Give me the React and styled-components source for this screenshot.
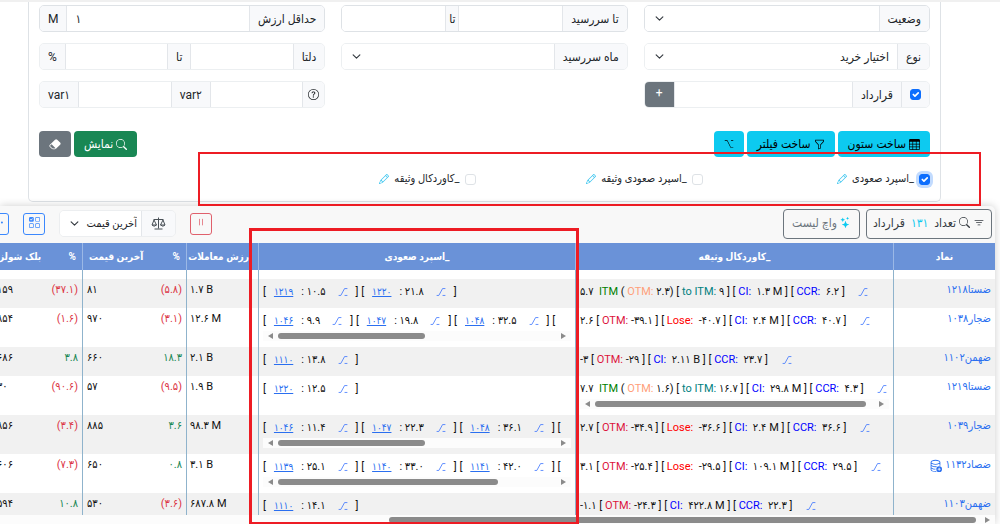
import React from "react";
import styled, { createGlobalStyle, css } from "styled-components";
import {
  BsSearch, BsTable, BsFunnel, BsOption, BsPencil, BsEraserFill, BsQuestionCircle,
  BsStars, BsFilter, BsPause, BsDatabaseAdd, BsUiChecksGrid, BsThreeDots,
} from "react-icons/bs";

const Global = createGlobalStyle`
  *, *::before, *::after { box-sizing: border-box; }
  body {
    margin: 0;
    background: #fff;
    color: #212529;
    font-family: Roboto, "DejaVu Sans Condensed", "DejaVu Sans", sans-serif;
    font-size: 12px;
    line-height: 16px;
    overflow: hidden;
  }
  button, input, select { font: inherit; color: inherit; }
  svg { display: block; flex: none; }
`;

const Page = styled.div`
  position: relative;
  border-top: 2px solid #f0f0f0;
`;

const Card = styled.form`
  margin: 0 59px 0 28px;
  padding: 3px 10px 14px;
  border: 1px solid #dee2e6;
  border-top: 0;
  border-radius: 0 0 5px 5px;
`;

const Fields = styled.div`
  display: grid;
  grid-template-columns: repeat(3, minmax(0, 1fr));
  gap: 11px 16px;
`;

const Group = styled.div`
  display: flex;
  height: 27px;
  border: 1px solid ${(p) => (p.$faint ? "#eceff1" : "#dee2e6")};
  border-radius: 5px;
  overflow: hidden;
  && > * + * { border-right: 1px solid #e3e6ea; }
`;

const Addon = styled.label`
  display: flex;
  align-items: center;
  justify-content: center;
  padding: 0 ${(p) => p.$pad || 8}px;
  background: #f8f9fb;
  white-space: nowrap;
`;

const TextBox = styled.input`
  flex: 1;
  min-width: 0;
  width: 0;
  border: 0;
  border-radius: 0;
  padding: 0 8px;
  background: #fff;
  outline: 0;
  direction: ltr;
`;

const Select = styled.select`
  flex: 1;
  min-width: 0;
  appearance: none;
  border: 0;
  border-radius: 0;
  padding: 0 ${(p) => p.$pad || 8}px 0 20px;
  outline: 0;
  background: #fff
    url("data:image/svg+xml,%3Csvg xmlns='http://www.w3.org/2000/svg' viewBox='0 0 16 16'%3E%3Cpath fill='none' stroke='%23343a40' stroke-linecap='round' stroke-linejoin='round' stroke-width='2' d='m2 5 6 6 6-6'/%3E%3C/svg%3E")
    no-repeat left 10px center / 9px 9px;
`;

const Check = styled.input`
  appearance: none;
  width: 11px;
  height: 11px;
  margin: 0;
  border: 1px solid #dee2e6;
  border-radius: 3px;
  background: #fff;
  &:checked {
    border-color: #0d6efd;
    background: #0d6efd
      url("data:image/svg+xml,%3Csvg xmlns='http://www.w3.org/2000/svg' viewBox='0 0 20 20'%3E%3Cpath fill='none' stroke='%23fff' stroke-linecap='round' stroke-linejoin='round' stroke-width='3' d='m6 10 3 3 6-6'/%3E%3C/svg%3E")
      center / 11px 11px;
  }
  ${(p) => p.$focus && css`box-shadow: 0 0 0 3px #c2dbfe;`}
`;

const AddButton = styled.button`
  width: 30px;
  border: 0;
  padding: 0 0 3px;
  background: #6c757d;
  color: #fff;
`;

const Actions = styled.div`
  display: flex;
  justify-content: space-between;
  margin-top: 23px;
`;

const Cluster = styled.div`
  display: flex;
  align-items: center;
  gap: 3px;
`;

const tones = {
  info: ["#0dcaf0", "#000"],
  success: ["#198754", "#fff"],
  secondary: ["#6c757d", "#fff"],
};

const Button = styled.button`
  display: flex;
  align-items: center;
  gap: 3px;
  height: 26px;
  padding: 0 10px;
  border: 0;
  border-radius: 4px;
  background: ${(p) => tones[p.$tone][0]};
  color: ${(p) => tones[p.$tone][1]};
`;

const Strategies = styled.div`
  display: grid;
  grid-template-columns: repeat(4, minmax(0, 1fr));
  column-gap: 18px;
  margin-top: 14px;
`;

const Strategy = styled.div`
  display: flex;
  align-items: center;
  gap: 5px;
  font-size: 11px;
  svg { color: #35c3ee; }
`;

const Panel = styled.section`
  margin: 4px 5px 0 0;
  border-radius: 0 5px 0 0;
  background: #f8f8f8;
  box-shadow: 0 0 8px rgba(0, 0, 0, 0.2);
`;

const Toolbar = styled.div`
  display: flex;
  align-items: center;
  height: 37px;
  padding: 0 3px 2px;
`;

const OutlineButton = styled.button`
  display: flex;
  align-items: center;
  gap: 3px;
  height: 30px;
  margin-left: 6px;
  padding: 0 ${(p) => (p.$muted ? 8 : 6)}px 2px;
  border: 1px solid #6c757d;
  border-radius: 4px;
  background: transparent;
  color: ${(p) => (p.$muted ? "#6c757d" : "#343a40")};
  b { margin: 0 3px; font-weight: 400; color: #0dcaf0; }
`;

const IconButton = styled.button`
  display: flex;
  flex: none;
  align-items: center;
  justify-content: center;
  width: 22px;
  height: 22px;
  padding: 0 0 3px;
  border: 1px solid ${(p) => p.$color};
  border-radius: 3px;
  background: transparent;
  color: ${(p) => p.$color};
`;

const PriceGroup = styled(Group)`
  flex: none;
  width: 117px;
  border-color: #eceef0;
  font-size: 11px;
`;

const TableTools = styled.div`
  display: flex;
  align-items: center;
  gap: 14px;
  margin-right: auto;
  width: 209px;
`;

const Viewport = styled.div`
  height: 272px;
  overflow: hidden;
`;

const Table = styled.table`
  width: 100%;
  min-width: 1003px;
  table-layout: fixed;
  border-collapse: separate;
  border-spacing: 0;
  background: #fff;
  font-size: 11px;
`;

const Head = styled.th`
  width: ${(p) => p.$w}px;
  height: 27px;
  padding: 0 6px;
  border-left: 1px solid #9bb8e6;
  background: #6a92d8;
  color: #fff;
  font-size: 10px;
  font-weight: 700;
  white-space: nowrap;
`;

const Row = styled.tr`
  height: ${(p) => (p.$spacer ? 9 : 29)}px;
  background: ${(p) => (p.$striped ? "#f1f1f1" : "#fff")};
`;

const Cell = styled.td`
  padding: ${(p) => (p.$spacer ? 0 : "3px 4px 0")};
  border-left: 1px solid #8fb3cc;
  vertical-align: top;
  white-space: nowrap;
  color: #111;
`;

const Between = styled.div`
  display: flex;
  justify-content: space-between;
  direction: rtl;
`;

const Percent = styled.span`
  direction: ltr;
  color: ${(p) => (p.$down ? "#dc3545" : "#198754")};
`;

const Symbol = styled.a`
  display: flex;
  align-items: center;
  gap: 3px;
  color: #2a6ff0;
  text-decoration: none;
`;

const Line = styled.div`
  display: flex;
  align-items: center;
  height: 20px;
  direction: ltr;
  overflow: hidden;
  white-space: pre;
  svg { color: #2f6bff; }
`;

const Leg = styled.span`
  display: flex;
  align-items: center;
  gap: 8px;
  a { color: #2a6ff0; font-size: 10px; text-underline-offset: 1px; }
  svg { margin-left: 4px; }
`;

const Tag = styled.span`
  color: ${(p) => p.$c};
`;

const Scroll = styled.div`
  display: flex;
  align-items: center;
  direction: ltr;
  height: ${(p) => p.$h || 10}px;
  margin-bottom: ${(p) => (p.$h ? 0 : 6)}px;
  padding: 0 5px;
  background: #fcfcfc;
`;

const Track = styled.div`
  flex: 1;
  margin: 0 ${(p) => (p.$wide ? 9 : 5)}px;
`;

const Thumb = styled.div`
  height: 6px;
  border-radius: 3px;
  background: #8b8b8b;
`;

const Highlight = styled.div`
  position: absolute;
  pointer-events: none;
  border: ${(p) => p.$b}px solid #ed1c24;
`;
const StrategyMark = styled(Highlight)`
  left: 198px;
  right: 19px;
  top: 150px;
  height: 54px;
`;
const ColumnMark = styled(Highlight)`
  left: 249px;
  right: 421px;
  top: 226px;
  height: 297px;
`;

function Arrow({ right }) {
  return (
    <svg width="5" height="6" viewBox="0 0 5 6" fill="#8b8b8b">
      <path d={right ? "M0 0L5 3L0 6Z" : "M5 0L0 3L5 6Z"} />
    </svg>
  );
}

function Bar({ size }) {
  return (
    <Scroll>
      <Arrow />
      <Track>
        <Thumb style={{ width: size + "%" }} />
      </Track>
      <Arrow right />
    </Scroll>
  );
}

function Payoff() {
  return (
    <svg width="10" height="10" viewBox="0 0 16 16" fill="none" stroke="currentColor" strokeWidth="1.2">
      <path d="M1 13.5H4.5L10.5 2.5H15M10.5 13.5H15" />
    </svg>
  );
}

function Scales() {
  return (
    <svg width="15" height="13" viewBox="0 0 30 26" fill="none" stroke="#495057" strokeWidth="2">
      <path d="M15 1V23M5 5H25M7 24H23M6 6L2 16H11ZM24 6L19 16H28ZM2 16Q6 21 11 16M19 16Q24 21 28 16" />
    </svg>
  );
}

const RED = "#dc143c", BLUE = "#0000ff", TEAL = "#008080";
const rows = [
  {
    name: "ضستا۱۲۱۸", value: "۱.۷ B", pct: "(۵.۸)", price: "۸۱", pct2: "(۳۷.۱)", bs: "۱۵۹",
    legs: [["۱۲۱۹", "۱۰.۵"], ["۱۲۲۰", "۲۱.۸"]],
    call: [["۵.۷  "], ["ITM", "#008000"], [" ( "], ["OTM:", "#ffa07a"], [" ۲.۳) [ "], ["to ITM:", TEAL], [" ۹ ] [ "], ["CI:", BLUE], ["  ۱.۳ M ] [ "], ["CCR:", BLUE], ["  ۶.۲ ]"]],
  },
  {
    name: "ضجار۱۰۳۸", value: "۱۲.۶ M", pct: "(۳.۱)", price: "۹۷۰", pct2: "(۱.۶)", bs: "۸۵۴",
    legs: [["۱۰۴۶", "۹.۹"], ["۱۰۴۷", "۱۹.۸"], ["۱۰۴۸", "۳۲.۵"]], more: 53,
    call: [["۲.۶ [ "], ["OTM:", RED], [" -۳۹.۱ ] [ "], ["Lose:", "#f00"], ["  -۴۰.۷ ] [ "], ["CI:", BLUE], ["  ۲.۴ M ] [ "], ["CCR:", BLUE], ["  ۴۰.۷ ]"]],
  },
  {
    name: "ضهمن۱۱۰۲", value: "۲.۱ B", pct: "۱۸.۳", price: "۶۶۰", pct2: "۳.۸", bs: "۶۸۶",
    legs: [["۱۱۱۰", "۱۳.۸"]],
    call: [["-۳ [ "], ["OTM:", RED], [" -۲۹ ] [ "], ["CI:", BLUE], ["  ۲.۱۱ B ] [ "], ["CCR:", BLUE], ["  ۲۳.۷ ]"]],
  },
  {
    name: "ضستا۱۲۱۹", value: "۱.۹ B", pct: "(۹.۵)", price: "۵۷", pct2: "(۹۰.۶)", bs: "۳۰",
    legs: [["۱۲۲۰", "۱۲.۵"]], callMore: true,
    call: [["۷.۷  "], ["ITM", "#008000"], [" ( "], ["OTM:", "#ffa07a"], [" ۱.۶) [ "], ["to ITM:", TEAL], [" ۱۶.۷ ] [ "], ["CI:", BLUE], ["  ۲۹.۸ M ] [ "], ["CCR:", BLUE], ["  ۴.۳ ]"]],
  },
  {
    name: "ضجار۱۰۳۹", value: "۹۸.۳ M", pct: "۳.۶", price: "۸۸۵", pct2: "(۳.۴)", bs: "۸۵۶",
    legs: [["۱۰۴۶", "۱۱.۴"], ["۱۰۴۷", "۲۲.۳"], ["۱۰۴۸", "۳۶.۱"]], more: 53,
    call: [["۲.۷ [ "], ["OTM:", RED], [" -۳۴.۹ ] [ "], ["Lose:", "#f00"], ["  -۳۶.۶ ] [ "], ["CI:", BLUE], ["  ۲.۴ M ] [ "], ["CCR:", BLUE], ["  ۳۶.۶ ]"]],
  },
  {
    name: "ضصاد۱۱۳۲", value: "۳.۱ B", pct: "۰.۸", price: "۶۵۰", pct2: "(۷.۳)", bs: "۶۰۶", stored: true,
    legs: [["۱۱۳۹", "۲۵.۱"], ["۱۱۴۰", "۳۳.۰"], ["۱۱۴۱", "۴۲.۰"]], more: 79,
    call: [["۳.۱ [ "], ["OTM:", RED], [" -۲۵.۴ ] [ "], ["Lose:", "#f00"], ["  -۲۹.۵ ] [ "], ["CI:", BLUE], ["  ۱۰۹.۱ M ] [ "], ["CCR:", BLUE], ["  ۲۹.۵ ]"]],
  },
  {
    name: "ضهمن۱۱۰۳", value: "۶۸۷.۸ M", pct: "(۳.۶)", price: "۵۳۰", pct2: "۱۰.۸", bs: "۵۹۴",
    legs: [["۱۱۱۰", "۱۴.۱"]],
    call: [["-۱.۱ [ "], ["OTM:", RED], [" -۲۴.۳ ] [ "], ["CI:", BLUE], ["  ۴۲۲.۸ M ] [ "], ["CCR:", BLUE], ["  ۲۲.۳ ]"]],
  },
];

function Pair({ pct, value }) {
  return (
    <Between>
      <Percent $down={pct[0] === "("}>{pct}</Percent>
      <span>{value}</span>
    </Between>
  );
}

function DataRow({ row, striped }) {
  return (
    <Row $striped={striped}>
      <Cell>
        <Symbol href="#">
          {row.name}
          {row.stored && <BsDatabaseAdd size={13} />}
        </Symbol>
      </Cell>
      <Cell>
        <Line>
          {row.call.map(([t, c], i) => (c ? <Tag key={i} $c={c}>{t}</Tag> : <span key={i}>{t}</span>))}
          <span>{"     "}</span>
          <Payoff />
        </Line>
        {row.callMore && <Bar size={97} />}
      </Cell>
      <Cell>
        <Line>
          {row.legs.map(([id, v]) => (
            <Leg key={id}>
              <span>[</span>
              <a href="#">{id}</a>
              <span>: {v}</span>
              <Payoff />
              <span>] </span>
            </Leg>
          ))}
          {row.more && <span>[</span>}
        </Line>
        {row.more && <Bar size={row.more} />}
      </Cell>
      <Cell dir="ltr">{row.value}</Cell>
      <Cell><Pair pct={row.pct} value={row.price} /></Cell>
      <Cell><Pair pct={row.pct2} value={row.bs} /></Cell>
    </Row>
  );
}

const strategies = [
  ["s1", "_اسپرد صعودی", true],
  ["s2", "_اسپرد صعودی وثیقه", false],
  ["s3", "_کاوردکال وثیقه", false],
];

export default function App() {
  return (
    <Page dir="rtl" lang="fa">
      <Global />
      <Card onSubmit={(e) => e.preventDefault()}>
        <Fields>
          <Group>
            <Addon htmlFor="status">وضعیت</Addon>
            <Select id="status"><option></option></Select>
          </Group>
          <Group>
            <Addon htmlFor="due-from">تا سررسید</Addon>
            <TextBox id="due-from" />
            <Addon htmlFor="due-to" $pad={3}>تا</Addon>
            <TextBox id="due-to" />
          </Group>
          <Group>
            <Addon htmlFor="min-value">حداقل ارزش</Addon>
            <TextBox id="min-value" defaultValue="۱" />
            <Addon as="span">M</Addon>
          </Group>
          <Group $faint>
            <Addon htmlFor="kind">نوع</Addon>
            <Select id="kind"><option>اختیار خرید</option></Select>
          </Group>
          <Group $faint>
            <Addon htmlFor="month">ماه سررسید</Addon>
            <Select id="month"><option></option></Select>
          </Group>
          <Group $faint>
            <Addon htmlFor="delta-from">دلتا</Addon>
            <TextBox id="delta-from" />
            <Addon htmlFor="delta-to">تا</Addon>
            <TextBox id="delta-to" />
            <Addon as="span">%</Addon>
          </Group>
          <Group $faint>
            <Addon as="span"><Check type="checkbox" id="contract-on" aria-label="قرارداد" defaultChecked /></Addon>
            <Addon htmlFor="contract">قرارداد</Addon>
            <TextBox id="contract" />
            <AddButton type="button">+</AddButton>
          </Group>
          <span />
          <Group $faint>
            <Addon as="span" $pad={5}><BsQuestionCircle size={11} /></Addon>
            <TextBox id="var2" />
            <Addon htmlFor="var2">var۲</Addon>
            <TextBox id="var1" />
            <Addon htmlFor="var1">var۱</Addon>
          </Group>
        </Fields>
        <Actions>
          <Cluster>
            <Button type="button" $tone="info"><BsTable size={11} />ساخت ستون</Button>
            <Button type="button" $tone="info"><BsFunnel size={11} />ساخت فیلتر</Button>
            <Button type="button" $tone="info" aria-label="option"><BsOption size={10} /></Button>
          </Cluster>
          <Cluster>
            <Button type="submit" $tone="success"><BsSearch size={11} />نمایش</Button>
            <Button type="reset" $tone="secondary" aria-label="reset"><BsEraserFill size={12} /></Button>
          </Cluster>
        </Actions>
        <Strategies>
          {strategies.map(([id, label, on]) => (
            <Strategy key={id}>
              <Check type="checkbox" id={id} defaultChecked={on} $focus={on} />
              <label htmlFor={id}>{label}</label>
              <BsPencil size={10} />
            </Strategy>
          ))}
        </Strategies>
      </Card>

      <Panel>
        <Toolbar>
          <OutlineButton>
            <BsFilter size={12} /><BsSearch size={11} />
            <span>تعداد <b>۱۳۱</b> قرارداد</span>
          </OutlineButton>
          <OutlineButton $muted><BsStars size={11} color="#0dcaf0" />واچ لیست</OutlineButton>
          <TableTools>
            <IconButton $color="#e0606c" aria-label="pause"><BsPause size={12} /></IconButton>
            <PriceGroup>
              <Addon htmlFor="price" $pad={9}><Scales /></Addon>
              <Select id="price" $pad={4}><option>آخرین قیمت</option></Select>
            </PriceGroup>
            <IconButton $color="#3b88fd" aria-label="columns"><BsUiChecksGrid size={11} /></IconButton>
            <IconButton $color="#3b88fd" aria-label="more"><BsThreeDots size={11} /></IconButton>
          </TableTools>
        </Toolbar>
        <Viewport>
          <Table>
            <thead>
              <tr>
                <Head $w={102}>نماد</Head>
                <Head $w={318}>_کاوردکال وثیقه</Head>
                <Head $w={317}>_اسپرد صعودی</Head>
                <Head $w={72}>ارزش معاملات</Head>
                <Head $w={104}><Between><span>%</span><span>آخرین قیمت</span></Between></Head>
                <Head $w={90}><Between><span>%</span><span>بلک شولز</span></Between></Head>
              </tr>
            </thead>
            <tbody>
              <Row $spacer>
                {[0, 1, 2, 3, 4, 5].map((i) => <Cell key={i} $spacer />)}
              </Row>
              {rows.map((r, i) => <DataRow key={r.name} row={r} striped={i % 2 === 0} />)}
            </tbody>
          </Table>
        </Viewport>
        <Scroll $h={9}>
          <Track $wide>
            <Thumb style={{ width: "61%", marginLeft: "39%" }} />
          </Track>
          <Arrow right />
        </Scroll>
      </Panel>
      <StrategyMark $b={2} />
      <ColumnMark $b={3} />
    </Page>
  );
}
